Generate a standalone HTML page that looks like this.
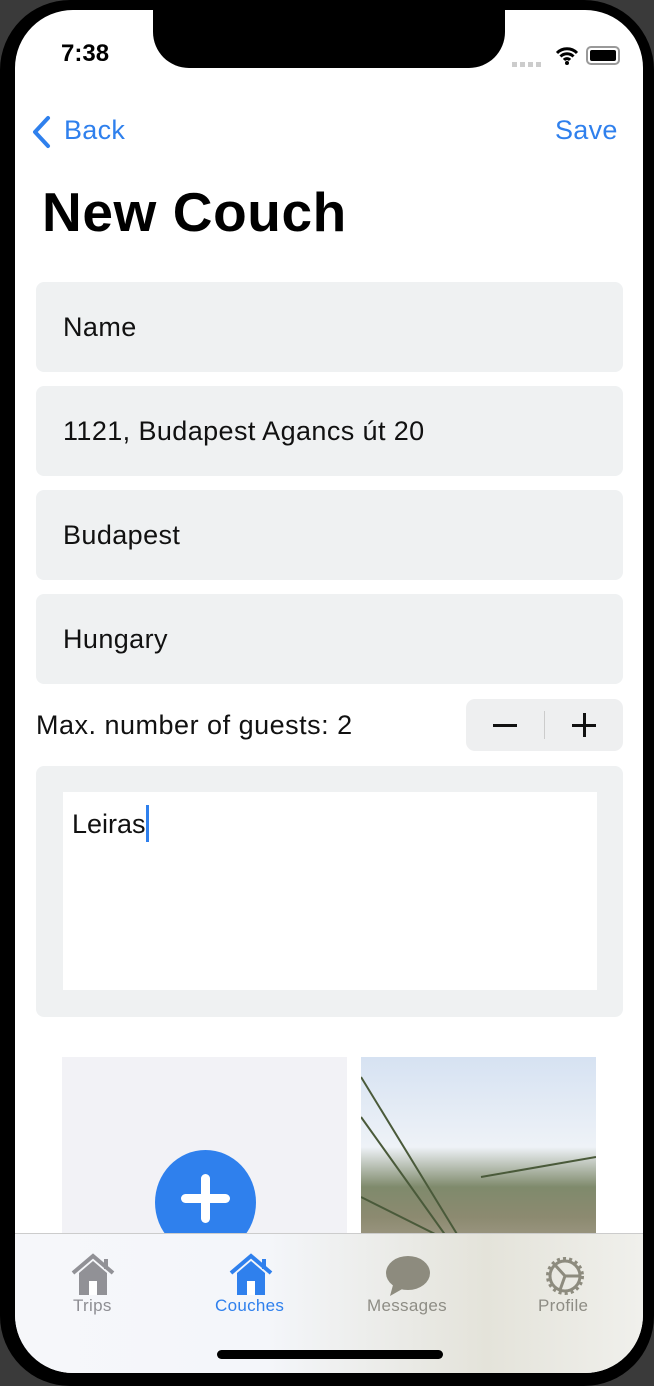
<!DOCTYPE html>
<html><head><style>
*{margin:0;padding:0;box-sizing:border-box}
body{width:654px;height:1386px;background:#3a3a3a;position:relative;overflow:hidden;font-family:"Liberation Sans",sans-serif}
.frame{position:absolute;left:0;top:0;width:654px;height:1386px;background:#000;border-radius:70px}
.screen{position:absolute;left:15px;top:10px;width:628px;height:1363px;background:#fff;border-radius:58px;overflow:hidden}
.notch{position:absolute;left:138px;top:0;width:352px;height:58px;background:#000;border-radius:0 0 36px 36px}
.a{position:absolute}
.field{position:absolute;left:21px;width:587px;height:90px;background:#eff1f2;border-radius:8px;font-size:27px;letter-spacing:0.4px;color:#111;padding-left:27px;line-height:90px}
.tl{position:absolute;top:1286px;font-size:17px;letter-spacing:0.3px}
</style></head><body>
<div class="frame"></div>
<div class="screen">
<div class="notch"></div>
<div class="a" style="left:46px;top:30px;font-size:24px;font-weight:bold;color:#000">7:38</div>
<div class="a" style="left:497px;top:52px;width:30px;height:5px;background:repeating-linear-gradient(90deg,#ccc 0 5px,transparent 5px 8px)"></div>
<svg class="a" style="left:540px;top:36px" width="24" height="20" viewBox="0 0 24 20"><path d="M2 7a14 14 0 0 1 20 0M5.5 10.5a9 9 0 0 1 13 0M9 14a4 4 0 0 1 6 0" stroke="#000" stroke-width="3" fill="none"/><circle cx="12" cy="17" r="2" fill="#000"/></svg>
<div class="a" style="left:571px;top:36px;width:34px;height:19px;border:2px solid #999;border-radius:5px;padding:2px"><div style="width:100%;height:100%;background:#000;border-radius:2px"></div></div>
<svg class="a" style="left:15px;top:105px" width="22" height="34" viewBox="0 0 22 34"><path d="M18 3L5 17l13 14" stroke="#2f80ed" stroke-width="4" fill="none" stroke-linecap="round" stroke-linejoin="round"/></svg>
<div class="a" style="left:49px;top:105px;font-size:27px;letter-spacing:0.3px;color:#2f80ed">Back</div>
<div class="a" style="left:540px;top:105px;font-size:27px;letter-spacing:0.3px;color:#2f80ed">Save</div>
<div class="a" style="left:27px;top:170px;font-size:55px;letter-spacing:0.6px;font-weight:bold;color:#000">New Couch</div>
<div class="field" style="top:272px">Name</div>
<div class="field" style="top:376px">1121, Budapest Agancs út 20</div>
<div class="field" style="top:480px">Budapest</div>
<div class="field" style="top:584px">Hungary</div>
<div class="a" style="left:21px;top:700px;font-size:27px;letter-spacing:0.5px;color:#111">Max. number of guests: 2</div>
<div class="a" style="left:451px;top:689px;width:157px;height:52px;background:#eeeff0;border-radius:9px">
<div class="a" style="left:27px;top:25px;width:24px;height:3px;background:#111"></div>
<div class="a" style="left:78px;top:12px;width:1px;height:28px;background:#ccc"></div>
<div class="a" style="left:106px;top:25px;width:24px;height:3px;background:#111"></div>
<div class="a" style="left:117px;top:14px;width:3px;height:24px;background:#111"></div>
</div>
<div class="a" style="left:21px;top:756px;width:587px;height:251px;background:#eff1f2;border-radius:8px">
<div class="a" style="left:27px;top:26px;width:534px;height:198px;background:#fff;font-size:27px;color:#111;padding:13px 9px">Leiras<span style="display:inline-block;width:3px;height:37px;background:#2f80ed;vertical-align:-9px"></span></div>
</div>
<div class="a" style="left:47px;top:1047px;width:285px;height:200px;background:#f2f2f6"></div>
<div class="a" style="left:140px;top:1140px;width:101px;height:105px;background:#2f80ed;border-radius:50%"></div>
<div class="a" style="left:166px;top:1184px;width:49px;height:9px;background:#fff;border-radius:5px"></div>
<div class="a" style="left:186px;top:1164px;width:9px;height:49px;background:#fff;border-radius:5px"></div>
<div class="a" style="left:346px;top:1047px;width:235px;height:200px;background:linear-gradient(180deg,#d6e2f2 0%,#eef2f7 45%,#7f8a6c 65%,#8c8a70 80%,#a8a090 100%)"></div>
<svg class="a" style="left:346px;top:1047px" width="235" height="200"><path d="M0 20L110 200M0 60L100 200M0 140L120 200M120 120L235 100" stroke="#4a5a3a" stroke-width="2" fill="none"/></svg>
<div class="a" style="left:0;top:1223px;width:628px;height:140px;background:linear-gradient(90deg,#f6f7fa 0%,#f4f6fa 40%,#e4e3da 75%,#f0f0ec 100%);border-top:1px solid #ccc"></div>
<svg class="a" style="left:55px;top:1243px" width="46" height="44" viewBox="0 0 46 44"><path d="M3 20L23 3l20 17" stroke="#919196" stroke-width="4" fill="none"/><path d="M9 20v22h28V20L23 8z" fill="#919196"/><rect x="19" y="28" width="8" height="14" fill="#fff"/><rect x="34" y="6" width="4" height="10" fill="#919196"/></svg>
<svg class="a" style="left:213px;top:1243px" width="46" height="44" viewBox="0 0 46 44"><path d="M3 20L23 3l20 17" stroke="#2f80ed" stroke-width="4" fill="none"/><path d="M9 20v22h28V20L23 8z" fill="#2f80ed"/><rect x="19" y="28" width="8" height="14" fill="#fff"/><rect x="34" y="6" width="4" height="10" fill="#2f80ed"/></svg>
<svg class="a" style="left:370px;top:1245px" width="46" height="42" viewBox="0 0 46 42"><ellipse cx="23" cy="18" rx="22" ry="17" fill="#8d8b7e"/><path d="M8 30L5 41l14-8z" fill="#8d8b7e"/></svg>
<svg class="a" style="left:527px;top:1243px" width="46" height="46" viewBox="0 0 46 46"><circle cx="23" cy="23" r="17" stroke="#8d8b7e" stroke-width="4" fill="none" stroke-dasharray="3 3"/><circle cx="23" cy="23" r="15" stroke="#8d8b7e" stroke-width="3" fill="none"/><path d="M23 23L13 12M23 23l14 0M23 23l-5 14" stroke="#8d8b7e" stroke-width="3"/></svg>
<div class="tl" style="left:58px;color:#8e8e93">Trips</div>
<div class="tl" style="left:200px;color:#2f80ed">Couches</div>
<div class="tl" style="left:352px;color:#8e8d85">Messages</div>
<div class="tl" style="left:523px;color:#8e8d85">Profile</div>
<div class="a" style="left:202px;top:1340px;width:226px;height:9px;background:#000;border-radius:5px"></div>
</div>
</body></html>
